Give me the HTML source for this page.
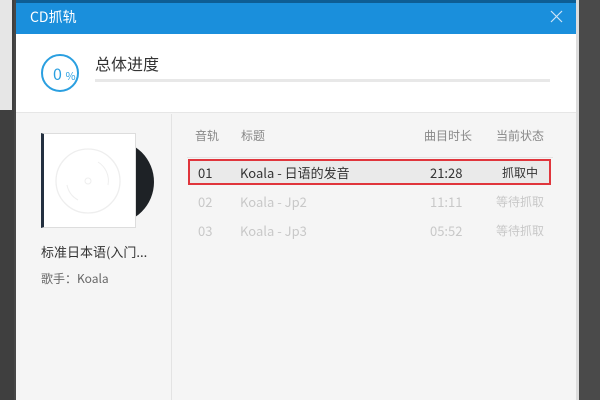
<!DOCTYPE html>
<html><head><meta charset="utf-8"><style>
*{margin:0;padding:0;box-sizing:border-box}
body{width:600px;height:400px;overflow:hidden;background:#474747;position:relative;font-family:"Noto Sans CJK SC","Liberation Sans",sans-serif}
.a{position:absolute}
.t{font-size:12px;white-space:nowrap;line-height:16px}
</style></head><body>
<div class="a" style="left:0;top:0;width:14px;height:400px;background:#3f3f3f"></div>
<div class="a" style="left:0;top:0;width:12px;height:110px;background:#e6e6e6"></div>
<div class="a" style="left:575px;top:0;width:25px;height:400px;background:#4a4a4a"></div>
<div class="a" style="left:575px;top:0;width:4px;height:400px;background:#ddd"></div>
<div class="a" style="left:16px;top:0;width:560px;height:400px;background:#f5f5f5"></div>
<div class="a" style="left:16px;top:0;width:560px;height:34px;background:#1a8fdc"></div>
<div class="a" style="left:16px;top:0;width:560px;height:3px;background:#0e5d94"></div>
<div class="a t" style="left:30px;top:8px;color:#fff;font-size:14px;line-height:18px">CD抓轨</div>
<svg class="a" style="left:550px;top:10px" width="13" height="13"><path d="M1 1L12 12M12 1L1 12" stroke="#cfe6f7" stroke-width="1.2"/></svg>
<div class="a" style="left:16px;top:34px;width:560px;height:79px;background:#fff;border-bottom:1px solid #e6e6e6"></div>
<div class="a" style="left:41px;top:54px;width:38px;height:38px;border:2px solid #2a9fe0;border-radius:50%"></div>
<div class="a t" style="left:53px;top:64px;color:#2a9fe0;font-size:16px;line-height:18px">0 <span style="font-size:11px">%</span></div>
<div class="a t" style="left:95px;top:52px;color:#333;font-size:16px;line-height:22px">总体进度</div>
<div class="a" style="left:95px;top:79px;width:455px;height:3px;background:#e8e8e8"></div>
<div class="a" style="left:171px;top:114px;width:1px;height:286px;background:#e3e3e3"></div>
<div class="a" style="left:110px;top:140px;width:44px;height:84px;border-radius:0 42px 42px 0;background:#1e2226"></div>
<div class="a" style="left:41px;top:133px;width:95px;height:95px;background:#fff;border:1px solid #ddd;border-left:3px solid #243040"></div>
<svg class="a" style="left:52px;top:145px" width="72" height="72"><circle cx="36" cy="36" r="32" fill="none" stroke="#eee" stroke-width="1.3"/><circle cx="36" cy="36" r="3" fill="none" stroke="#eee"/><path d="M46 17A22 22 0 0 1 56 40M26 55A22 22 0 0 1 15 40" fill="none" stroke="#eee"/></svg>
<div class="a t" style="left:41px;top:243px;color:#333;font-size:13px;line-height:18px">标准日本语(入门...</div>
<div class="a t" style="left:41px;top:271px;color:#666">歌手：Koala</div>
<div class="a t" style="left:195px;top:128px;color:#888">音轨</div>
<div class="a t" style="left:241px;top:128px;color:#888">标题</div>
<div class="a t" style="left:424px;top:128px;color:#888">曲目时长</div>
<div class="a t" style="left:496px;top:128px;color:#888">当前状态</div>
<div class="a" style="left:187px;top:157px;width:366px;height:1px;background:#e3e3e3"></div>
<div class="a" style="left:188px;top:159px;width:363px;height:26px;background:#eaeaea;border:2px solid #e0353c"></div>
<div class="a t" style="left:198px;top:165px;color:#333;font-size:13px">01</div>
<div class="a t" style="left:240px;top:165px;color:#333;font-size:13px">Koala - 日语的发音</div>
<div class="a t" style="left:430px;top:165px;color:#333;font-size:13px">21:28</div>
<div class="a t" style="left:502px;top:165px;color:#333">抓取中</div>
<div class="a t" style="left:198px;top:194px;color:#c8c8c8;font-size:13px">02</div>
<div class="a t" style="left:240px;top:194px;color:#c8c8c8;font-size:13px">Koala - Jp2</div>
<div class="a t" style="left:430px;top:194px;color:#c8c8c8;font-size:13px">11:11</div>
<div class="a t" style="left:496px;top:194px;color:#c8c8c8">等待抓取</div>
<div class="a t" style="left:198px;top:223px;color:#c8c8c8;font-size:13px">03</div>
<div class="a t" style="left:240px;top:223px;color:#c8c8c8;font-size:13px">Koala - Jp3</div>
<div class="a t" style="left:430px;top:223px;color:#c8c8c8;font-size:13px">05:52</div>
<div class="a t" style="left:496px;top:223px;color:#c8c8c8">等待抓取</div>
</body></html>
